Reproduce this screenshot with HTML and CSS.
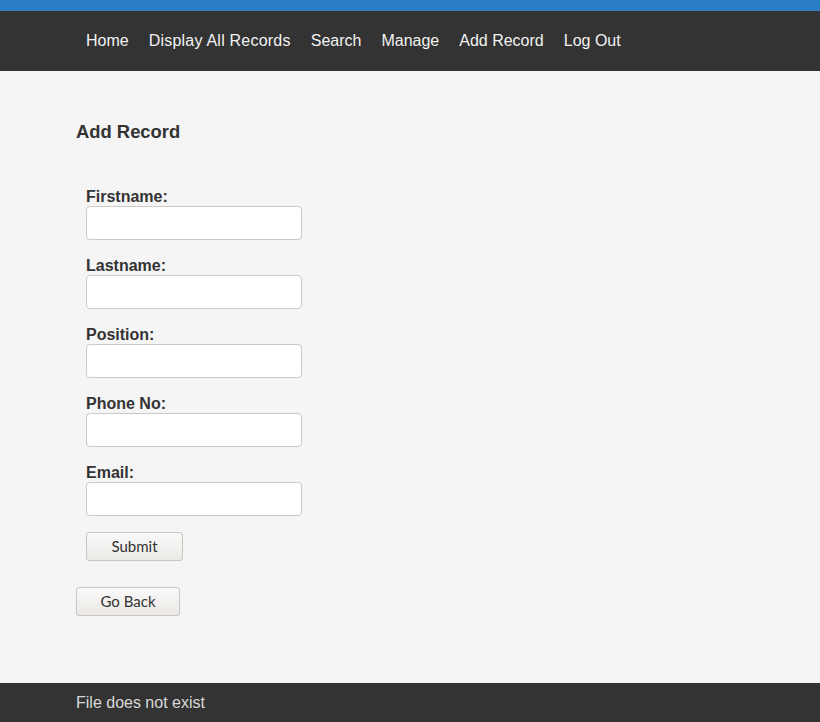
FILE: index.html
```html
<!DOCTYPE html>
<html>
<head>
<meta charset="utf-8">
<title>Add Record</title>
<link rel="stylesheet" href="styles.css">
</head>
<body>
<div class="topbar"></div>
<nav class="nav">
  <a href="#">Home</a>
  <a href="#" class="wide">Display All Records</a>
  <a href="#">Search</a>
  <a href="#">Manage</a>
  <a href="#">Add Record</a>
  <a href="#">Log Out</a>
</nav>
<main class="main">
  <h2 class="title">Add Record</h2>
  <form class="form">
    <label class="label">Firstname:</label>
    <input class="input" type="text">
    <label class="label">Lastname:</label>
    <input class="input" type="text">
    <label class="label">Position:</label>
    <input class="input" type="text">
    <label class="label">Phone No:</label>
    <input class="input" type="text">
    <label class="label">Email:</label>
    <input class="input" type="text">
    <button class="btn btn-submit" type="button">Submit</button>
  </form>
  <button class="btn btn-back" type="button">Go Back</button>
</main>
<footer class="footer">File does not exist</footer>
</body>
</html>
```
FILE: styles.css
```css
html, body {
  margin: 0;
  padding: 0;
}
body {
  background: #f5f5f5;
  font-family: "Liberation Sans", Arial, sans-serif;
  color: #333;
  min-height: 100vh;
  display: flex;
  flex-direction: column;
}
.topbar {
  height: 11px;
  background: #2a7ec6;
}
.nav {
  height: 60px;
  background: #333333;
  display: flex;
  align-items: center;
  padding-left: 86px;
  gap: 20px;
}
.nav a {
  color: #f2f2f2;
  text-decoration: none;
  font-size: 16px;
  line-height: 20px;
}
.nav a.wide {
  letter-spacing: 0.22px;
}
.main {
  flex: 1;
  padding: 0 76px;
}
.title {
  font-size: 18.4px;
  line-height: 22px;
  font-weight: bold;
  margin: 50px 0 45px;
  color: #333;
}
.form {
  display: flex;
  flex-direction: column;
  align-items: flex-start;
  padding-left: 10px;
}
.label {
  display: block;
  font-size: 16px;
  font-weight: bold;
  line-height: 18px;
  color: #333;
}
.input {
  box-sizing: border-box;
  width: 216px;
  height: 34px;
  border: 1px solid #cdc9c4;
  border-radius: 4px;
  background: #fff;
  margin: 0 0 17px;
  padding: 0 8px;
}
.btn {
  box-sizing: border-box;
  height: 29px;
  border: 1px solid #c9c5c0;
  border-radius: 3px;
  background: linear-gradient(#f9f9f8, #ebe9e6);
  font-family: Lato, "DejaVu Sans", sans-serif;
  font-size: 15px;
  color: #333;
  padding: 0 0 2px;
}
.btn-submit {
  width: 97px;
  margin-top: -1px;
}
.btn-back {
  width: 104px;
  margin-top: 26px;
  margin-bottom: 67px;
}
.footer {
  height: 39px;
  background: #333333;
  color: #d9d9d9;
  font-size: 16px;
  line-height: 39px;
  padding-left: 76px;
}
```
